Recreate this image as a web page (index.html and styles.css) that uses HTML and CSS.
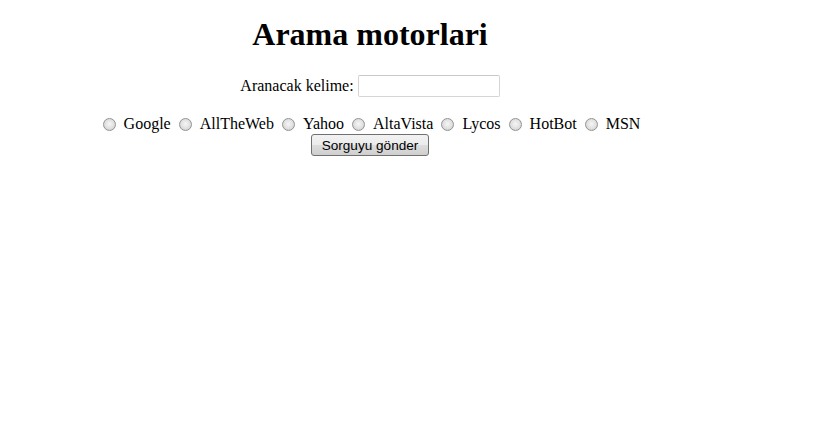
FILE: index.html
```html
<!DOCTYPE html>
<html>
<head>
<meta charset="utf-8">
<link rel="stylesheet" href="styles.css">
</head>
<body>
<div class="page">
  <h1 class="title">Arama motorlari</h1>
  <form class="search">
    <div class="query-row">
      <label class="label" for="q">Aranacak kelime:</label>
      <input class="text-input" id="q" type="text">
    </div>
    <div class="engines">
      <label class="engine"><input class="radio" type="radio" name="e"> Google</label>
      <label class="engine"><input class="radio" type="radio" name="e"> AllTheWeb</label>
      <label class="engine"><input class="radio" type="radio" name="e"> Yahoo</label>
      <label class="engine"><input class="radio" type="radio" name="e"> AltaVista</label>
      <label class="engine"><input class="radio" type="radio" name="e"> Lycos</label>
      <label class="engine"><input class="radio" type="radio" name="e"> HotBot</label>
      <label class="engine"><input class="radio" type="radio" name="e"> MSN</label>
    </div>
    <button class="submit" type="button">Sorguyu gönder</button>
  </form>
</div>
</body>
</html>
```

FILE: styles.css
```css
html, body {
  margin: 0;
  padding: 0;
  background: #fff;
}
body {
  font-family: "Liberation Serif", "Times New Roman", serif;
  font-size: 16px;
  color: #000;
}
.page {
  width: 740px;
  display: flex;
  flex-direction: column;
  align-items: center;
}
.title {
  font-size: 32px;
  font-weight: bold;
  margin: 16px 0 0 0;
  line-height: 37px;
}
.search {
  display: flex;
  flex-direction: column;
  align-items: center;
  margin-top: 22px;
}
.query-row {
  display: flex;
  align-items: center;
  gap: 4px;
}
.label {
  line-height: 22px;
}
.text-input {
  box-sizing: border-box;
  width: 142px;
  height: 22px;
  margin: 0;
  border: 1px solid #d5d5d5;
  border-top-color: #c8c8c8;
  border-radius: 2px;
  padding: 1px 2px;
  font-family: "Liberation Sans", Arial, sans-serif;
  font-size: 13px;
}
.engines {
  display: flex;
  align-items: center;
  gap: 5px;
  margin-top: 18px;
  line-height: 18px;
}
.engine {
  display: inline-flex;
  align-items: center;
}
.radio {
  -webkit-appearance: none;
  appearance: none;
  width: 13px;
  height: 13px;
  margin: 0 8px 0 3px;
  border-radius: 50%;
  border: 1px solid #939393;
  background: radial-gradient(circle at 50% 45%, #f6f6f6 0%, #e2e2e2 50%, #c8c8c8 100%);
  box-sizing: border-box;
}
.submit {
  box-sizing: border-box;
  width: 118px;
  height: 22px;
  margin: 1px 0 0 0;
  padding: 0 4px;
  font-family: "Liberation Sans", Arial, sans-serif;
  font-size: 13.6px;
  color: #000;
  border: 1px solid #707070;
  border-radius: 3px;
  background: linear-gradient(#f2f2f2 0%, #ebebeb 50%, #dddddd 50%, #cfcfcf 100%);
}
```
